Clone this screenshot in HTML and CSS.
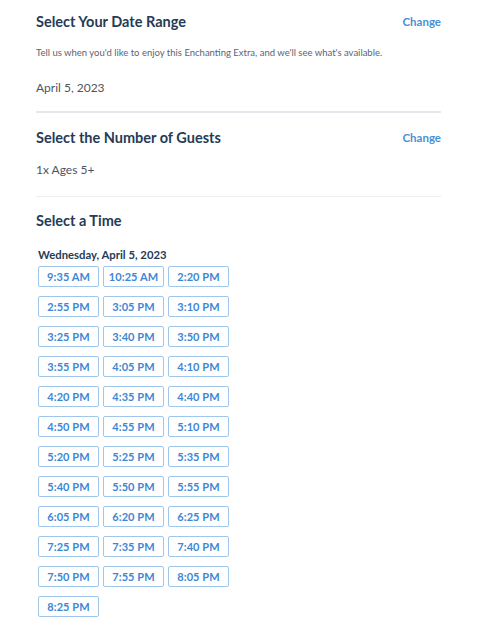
FILE: index.html
```html
<!DOCTYPE html>
<html>
<head>
<meta charset="utf-8">
<link rel="stylesheet" href="styles.css">
</head>
<body>
<div class="page">
  <section class="section first">
    <div class="head-row">
      <h2 class="title">Select Your Date Range</h2>
      <a class="change">Change</a>
    </div>
    <p class="desc">Tell us when you'd like to enjoy this Enchanting Extra, and we'll see what's available.</p>
    <p class="value date">April 5, 2023</p>
  </section>
  <div class="divider thick"></div>
  <section class="section">
    <div class="head-row">
      <h2 class="title">Select the Number of Guests</h2>
      <a class="change">Change</a>
    </div>
    <p class="value guests">1x Ages 5+</p>
  </section>
  <div class="divider thin"></div>
  <section class="section times">
    <h2 class="title">Select a Time</h2>
    <div class="day">Wednesday, April 5, 2023</div>
    <div class="grid">
      <button class="slot">9:35 AM</button>
      <button class="slot">10:25 AM</button>
      <button class="slot">2:20 PM</button>
      <button class="slot">2:55 PM</button>
      <button class="slot">3:05 PM</button>
      <button class="slot">3:10 PM</button>
      <button class="slot">3:25 PM</button>
      <button class="slot">3:40 PM</button>
      <button class="slot">3:50 PM</button>
      <button class="slot">3:55 PM</button>
      <button class="slot">4:05 PM</button>
      <button class="slot">4:10 PM</button>
      <button class="slot">4:20 PM</button>
      <button class="slot">4:35 PM</button>
      <button class="slot">4:40 PM</button>
      <button class="slot">4:50 PM</button>
      <button class="slot">4:55 PM</button>
      <button class="slot">5:10 PM</button>
      <button class="slot">5:20 PM</button>
      <button class="slot">5:25 PM</button>
      <button class="slot">5:35 PM</button>
      <button class="slot">5:40 PM</button>
      <button class="slot">5:50 PM</button>
      <button class="slot">5:55 PM</button>
      <button class="slot">6:05 PM</button>
      <button class="slot">6:20 PM</button>
      <button class="slot">6:25 PM</button>
      <button class="slot">7:25 PM</button>
      <button class="slot">7:35 PM</button>
      <button class="slot">7:40 PM</button>
      <button class="slot">7:50 PM</button>
      <button class="slot">7:55 PM</button>
      <button class="slot">8:05 PM</button>
      <button class="slot">8:25 PM</button>
    </div>
  </section>
</div>
</body>
</html>
```
FILE: styles.css
```css
html, body {
  margin: 0;
  padding: 0;
  background: #ffffff;
}
body {
  font-family: Lato, "Open Sans", sans-serif;
  color: #253b56;
}
.page {
  width: 405px;
  margin-left: 36px;
  padding-top: 11px;
}
.head-row {
  display: flex;
  justify-content: space-between;
  align-items: center;
  height: 22px;
}
.title {
  margin: 0;
  font-size: 14.5px;
  font-weight: 700;
  color: #253b56;
  line-height: 22px;
}
.change {
  font-size: 11.5px;
  font-weight: 700;
  color: #4a8fd6;
  line-height: 18px;
}
.desc {
  margin: 13px 0 0;
  font-size: 9.5px;
  color: #5b6472;
  line-height: 14px;
}
.value {
  margin: 0;
  font-size: 12px;
  color: #4c5563;
  line-height: 16px;
}
.date {
  margin-top: 20px;
}
.divider {
  margin: 0;
}
.divider.thick {
  height: 2px;
  background: #e6e8ee;
  margin-top: 15px;
  margin-bottom: 14px;
}
.guests {
  margin-top: 13px;
}
.divider.thin {
  height: 1px;
  background: #ebedf0;
  margin-top: 18px;
  margin-bottom: 13px;
}
.day {
  margin: 16px 0 0 2px;
  font-size: 11.3px;
  font-weight: 700;
  color: #253b56;
  line-height: 14px;
}
.grid {
  margin: 4px 0 0 2px;
  display: grid;
  grid-template-columns: repeat(3, 61px);
  column-gap: 4px;
  row-gap: 9px;
}
.slot {
  height: 21px;
  padding: 0;
  border: 1px solid #9fc6ec;
  border-radius: 2px;
  background: #ffffff;
  color: #3d87d4;
  font-family: Lato, "Open Sans", sans-serif;
  font-size: 11px;
  font-weight: 700;
  line-height: 19px;
  text-align: center;
  letter-spacing: 0.1px;
}
```
